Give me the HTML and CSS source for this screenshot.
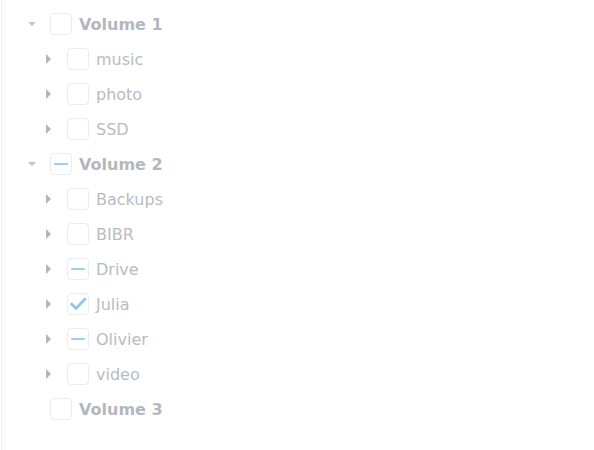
FILE: index.html
```html
<!DOCTYPE html>
<html>
<head>
<meta charset="utf-8">
<link rel="stylesheet" href="styles.css">
</head>
<body>
<div class="panel">
  <ul class="tree">
    <li class="row vol"><span class="tog down"></span><span class="cb"></span><span class="label">Volume 1</span></li>
    <li class="row child"><span class="tog right"></span><span class="cb"></span><span class="label">music</span></li>
    <li class="row child"><span class="tog right"></span><span class="cb"></span><span class="label">photo</span></li>
    <li class="row child"><span class="tog right"></span><span class="cb"></span><span class="label">SSD</span></li>
    <li class="row vol"><span class="tog down"></span><span class="cb"><svg viewBox="0 0 22 22" width="22" height="22"><path d="M5 11H17" class="mark"/></svg></span><span class="label">Volume 2</span></li>
    <li class="row child"><span class="tog right"></span><span class="cb"></span><span class="label">Backups</span></li>
    <li class="row child"><span class="tog right"></span><span class="cb"></span><span class="label">BIBR</span></li>
    <li class="row child"><span class="tog right"></span><span class="cb"><svg viewBox="0 0 22 22" width="22" height="22"><path d="M5 11H17" class="mark"/></svg></span><span class="label">Drive</span></li>
    <li class="row child"><span class="tog right"></span><span class="cb"><svg viewBox="0 0 22 22" width="22" height="22"><path d="M4.5 11L9 15.5L18 6" class="mark check"/></svg></span><span class="label">Julia</span></li>
    <li class="row child"><span class="tog right"></span><span class="cb"><svg viewBox="0 0 22 22" width="22" height="22"><path d="M5 11H17" class="mark"/></svg></span><span class="label">Olivier</span></li>
    <li class="row child"><span class="tog right"></span><span class="cb"></span><span class="label">video</span></li>
    <li class="row vol"><span class="tog"></span><span class="cb"></span><span class="label">Volume 3</span></li>
  </ul>
</div>
</body>
</html>
```
FILE: styles.css
```css
html, body {
  margin: 0;
  padding: 0;
  background: #ffffff;
}
body {
  padding-left: 1px;
  font-family: "DejaVu Sans", Verdana, sans-serif;
  font-size: 16px;
}
.panel {
  border-left: 1px solid #eef2f6;
  height: 450px;
  box-sizing: border-box;
}
.tree {
  list-style: none;
  margin: 0;
  padding: 6px 0 0 0;
}
.row {
  display: flex;
  align-items: center;
  height: 35px;
}
.vol {
  padding-left: 18px;
}
.child {
  padding-left: 35px;
}
.tog {
  width: 24px;
  height: 24px;
  display: flex;
  align-items: center;
  justify-content: center;
  flex: none;
}
.tog.down::before {
  content: "";
  width: 0;
  height: 0;
  margin-top: 1px;
  border-left: 4.5px solid transparent;
  border-right: 4.5px solid transparent;
  border-top: 4.5px solid #c2c4c7;
}
.tog.right::before {
  content: "";
  width: 0;
  height: 0;
  margin-left: -2px;
  border-top: 5px solid transparent;
  border-bottom: 5px solid transparent;
  border-left: 5px solid #b3b5b8;
}
.cb {
  width: 22px;
  height: 22px;
  box-sizing: border-box;
  border: 1px solid #e9edf1;
  border-radius: 4px;
  margin-left: 6px;
  flex: none;
  position: relative;
  background: #ffffff;
}
.cb svg {
  position: absolute;
  left: -1px;
  top: -1px;
}
.mark {
  fill: none;
  stroke: #a2cdf3;
  stroke-width: 2.2;
  stroke-linecap: round;
  stroke-linejoin: round;
}
.mark.check {
  stroke: #8fc4f1;
  stroke-width: 2.6;
}
.label {
  margin-left: 7px;
  padding-top: 2px;
  color: #b8bcc2;
  white-space: nowrap;
}
.vol .label {
  font-weight: bold;
  color: #b3b7bd;
}
```
